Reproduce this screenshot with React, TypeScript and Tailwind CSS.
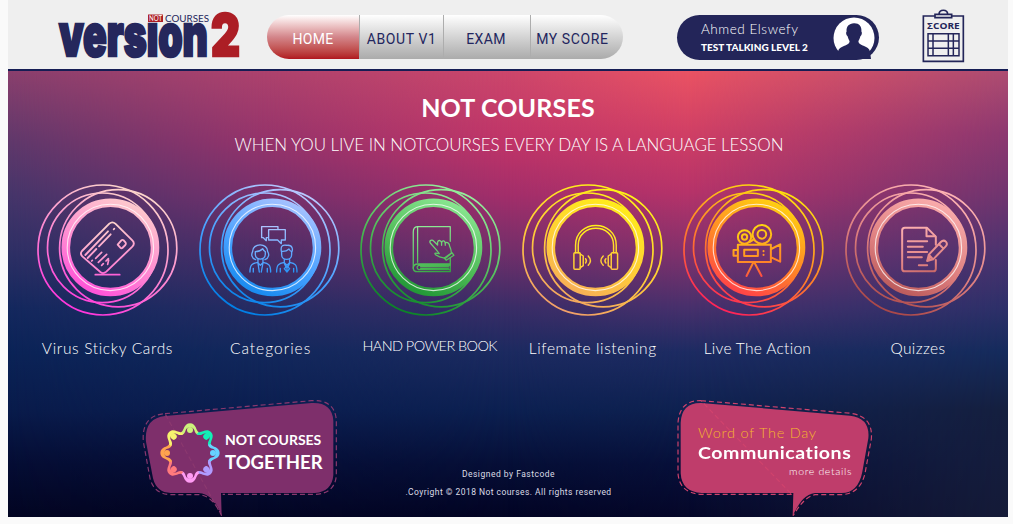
import React from "react";

type Palette = { id: string; light: string; mid: string; deep: string };

const palettes: Record<string, Palette> = {
  pink: { id: "pink", light: "#fdd6cb", mid: "#ff86d2", deep: "#ff35dc" },
  blue: { id: "blue", light: "#b9c8ff", mid: "#45a0ff", deep: "#007fe6" },
  green: { id: "green", light: "#95ef9c", mid: "#4bb954", deep: "#0b8426" },
  yellow: { id: "yellow", light: "#fff315", mid: "#ffcb38", deep: "#f2a068" },
  orange: { id: "orange", light: "#ffe00c", mid: "#ff7d2a", deep: "#ff2358" },
  rose: { id: "rose", light: "#ffb4b4", mid: "#de7f7f", deep: "#a94748" },
};

function CardIcon() {
  return (
    <g strokeWidth="5.5">
      <path d="M253 146Q262 138 271 146L322 196Q331 205 322 215L244 290Q235 298 226 291L172 244Q164 236 171 228Z" />
      <path d="M211 299H284" />
      <path d="M181 240L249 169M257 178L222 214M214 222L188 249" />
      <path d="M200 258L202 256M266 163L268 161M212 250L230 232M220 262L245 238M230 271L235 266M248 268L251 255M243 258L250 251" strokeWidth="5" />
      <path d="M278 209L289 196Q292 193 296 196L302 203Q304 207 301 210L292 219Q289 221 286 218Z" />
    </g>
  );
}

function PeopleIcon() {
  return (
    <g strokeWidth="4">
      <path d="M728 188H723V197L714 188H709V155H758V163" />
      <path d="M730 164H780V195H768V206L757 195H730Z" />
      <path d="M691 254C677 249 678 237 682 230C681 203 728 203 727 230C732 237 732 249 719 254" />
      <path d="M690 230C701 230 708 225 712 221Q716 229 720 230V238C720 257 690 257 690 238Z" />
      <path d="M698 253V263L705 271L713 263V253M698 262C680 265 674 270 674 291M713 262C730 265 736 270 736 291M684 280V291M726 280V291M698 264L702 291M713 264L708 291" />
      <path d="M769 232C762 205 781 211 785 211C803 209 803 225 799 232M769 229C780 230 787 226 791 222Q795 229 799 230V239C799 258 769 258 769 239Z" />
      <path d="M777 254V263L785 271L793 263V254M777 262C760 265 754 270 754 291M793 262C810 265 815 270 815 291M765 280V291M805 280V291M777 265L782 276L777 281L785 291L793 281L788 276L793 265M785 271V291" />
    </g>
  );
}

function BookIcon() {
  return (
    <g strokeWidth="3.8">
      <path d="M317 199V155H218Q206 156 206 171V280Q207 290 218 290H317V249" />
      <path d="M219 156V262M317 267H220Q206 267 206 280M317 271H222Q213 276 222 284H317M228 275H312M228 280H312" />
      <path d="M274 223L257 204C253 197 262 192 267 198L279 210V201C282 193 290 197 291 203C293 195 301 197 302 204C308 198 315 207 315 213C319 222 321 228 320 235L303 250C297 248 286 250 276 241C268 237 270 232 278 235L284 236L274 223Z" />
      <path d="M322 233L328 241L305 256L299 249ZM291 203V211M302 204V211" />
    </g>
  );
}

function HeadphonesIcon() {
  return (
    <g strokeWidth="4.4">
      <path d="M692 233V211C692 132 814 132 814 211V233M700 233V211C700 143 806 143 806 211V233" />
      <rect x="687" y="233" width="19" height="50" rx="3" />
      <rect x="799" y="233" width="19" height="50" rx="3" />
      <path d="M706 237L715 243V272L706 278M799 237L790 243V272L799 278" />
      <path d="M722 251Q727 257 722 264M730 243Q743 257 730 271M783 251Q777 257 783 264M775 243Q761 257 775 271" />
    </g>
  );
}

function CameraIcon() {
  return (
    <g strokeWidth="6">
      <circle cx="211" cy="186" r="20" />
      <circle cx="211" cy="186" r="8" />
      <circle cx="263" cy="178" r="28" />
      <circle cx="263" cy="178" r="13" />
      <path d="M191 209H290V261H191ZM190 225H178V242H190M291 222L318 208V260L291 247M227 201L239 193" />
      <path d="M210 224H251V243H210ZM237 263L217 303M241 263L262 303" />
      <path d="M268 228V229M268 239V240" />
    </g>
  );
}

function QuizIcon() {
  return (
    <g strokeWidth="6">
      <path d="M784 209V185L757 158H691Q683 158 683 166V281Q683 289 691 289H776Q784 289 784 281V255" />
      <path d="M756 160V184H782M700 199H758M700 215H745M700 231H758M700 247H742M733 271H758" />
      <path d="M758 258L763 239L799 201Q807 193 814 200Q821 207 813 215L776 253ZM763 239L776 253M793 207L807 221M758 257L769 246" />
    </g>
  );
}

type Topic = {
  label: string;
  palette: Palette;
  shift: number;
  Icon: () => React.JSX.Element;
  text: string;
};

const topics: Topic[] = [
  { label: "Virus Sticky Cards", palette: palettes.pink, shift: -10, Icon: CardIcon, text: "text-[15.5px] tracking-[0.65px] ml-[1px]" },
  { label: "Categories", palette: palettes.blue, shift: -171.7, Icon: PeopleIcon, text: "text-[15.5px] tracking-[1px] ml-[4px]" },
  { label: "HAND POWER BOOK", palette: palettes.green, shift: -13.4, Icon: BookIcon, text: "text-[14.5px] tracking-[-0.6px] -mt-[2px] mr-[1px]" },
  { label: "Lifemate listening", palette: palettes.yellow, shift: -175.1, Icon: HeadphonesIcon, text: "text-[15.5px] tracking-[0.6px] ml-[2px]" },
  { label: "Live The Action", palette: palettes.orange, shift: -6.8, Icon: CameraIcon, text: "text-[15.5px] tracking-[0.3px] ml-[8px]" },
  { label: "Quizzes", palette: palettes.rose, shift: -168.5, Icon: QuizIcon, text: "text-[15.5px] tracking-[0.4px] ml-[6px]" },
];

function TopicBadge({ topic }: { topic: Topic }) {
  const { palette, shift, Icon } = topic;
  const ring = `url(#ring-${palette.id})`;
  const glyph = `url(#glyph-${palette.id})`;
  return (
    <svg viewBox="0 0 144 136" className="h-[136px] w-[144px]" fill="none">
      <defs>
        <linearGradient id={`ring-${palette.id}`} gradientUnits="userSpaceOnUse" x1="100" y1="8" x2="46" y2="130">
          <stop offset="0" stopColor={palette.light} />
          <stop offset="0.55" stopColor={palette.mid} />
          <stop offset="1" stopColor={palette.deep} />
        </linearGradient>
        <linearGradient id={`glyph-${palette.id}`} gradientUnits="userSpaceOnUse" x1={-shift * 3 + 210} y1="140" x2={-shift * 3 + 240} y2="330">
          <stop offset="0" stopColor={palette.light} />
          <stop offset="0.7" stopColor={palette.mid} />
          <stop offset="1" stopColor={palette.deep} />
        </linearGradient>
      </defs>
      <g stroke={ring} strokeWidth="1.7">
        <circle cx="68" cy="68" r="65" />
        <circle cx="83.2" cy="66.2" r="58.6" />
        <circle cx="67.3" cy="65.8" r="54.8" />
        <circle cx="75.4" cy="65.4" r="44.6" strokeWidth="8.6" />
      </g>
      <circle cx="75.4" cy="65.4" r="43.2" stroke="#fff" strokeOpacity="0.75" strokeWidth="1.1" />
      <g transform={`translate(${shift} -7) scale(0.33333)`} stroke={glyph} strokeLinecap="round" strokeLinejoin="round">
        <Icon />
      </g>
    </svg>
  );
}

function Logo() {
  return (
    <svg viewBox="0 0 190 52" className="h-[52px] w-[190px]" fontFamily="Inter, 'Liberation Sans', sans-serif">
      <text x="5" y="45" fontSize="58" fontWeight="900" textLength="149" lengthAdjust="spacingAndGlyphs" fill="#25275c" stroke="#25275c" strokeWidth="2.6">
        vers&#305;on
      </text>
      <text x="157" y="45" fontSize="58" fontWeight="900" textLength="29" lengthAdjust="spacingAndGlyphs" fill="#ac1e25" stroke="#ac1e25" strokeWidth="2.6">
        2
      </text>
      <rect x="94" y="3.5" width="15" height="7.5" fill="#ac1e25" />
      <text x="95" y="9.8" fontSize="7" fontFamily="Lato, sans-serif" textLength="13" lengthAdjust="spacingAndGlyphs" fill="#fff">
        NOT
      </text>
      <text x="111" y="11" fontSize="10" fontFamily="Lato, sans-serif" textLength="44" lengthAdjust="spacingAndGlyphs" fill="#25275c">
        COURSES
      </text>
    </svg>
  );
}

function Avatar() {
  return (
    <svg viewBox="0 0 42 42" className="size-[42px]">
      <circle cx="21" cy="21" r="20.5" fill="#fff" />
      <path
        d="M21 6.2C26 6 29 9.5 28.4 14.5C29.4 15.5 28.8 18.6 27.4 19.2C26.8 22 25.6 23 25.4 24.8C26.2 29.2 36 28.5 37 34.5L38 42H4L5 34.5C6 28.5 15.8 29.2 16.6 24.8C16.4 23 15.2 22 14.6 19.2C13.2 18.6 12.6 15.5 13.6 14.5C13 9.5 16 6.4 21 6.2Z"
        fill="#232559"
      />
    </svg>
  );
}

function ScoreBoard() {
  return (
    <svg viewBox="785 22 134 166" className="h-[55.3px] w-[44.7px]" fill="none" stroke="#232559" strokeWidth="5">
      <path d="M827 46H792V182H912V46H877" />
      <path d="M827 41H877V51H827ZM839 40C840 25 864 25 865 40" />
      <text x="803" y="86" fontSize="28" fontWeight="700" fontFamily="'Open Sans', sans-serif" textLength="98" lengthAdjust="spacingAndGlyphs" fill="#232559" stroke="none">
        <tspan>&Sigma;</tspan>CORE
      </text>
      <path d="M806 99H899V165H806ZM821 99V165M867 99V165M882 99V165M806 121H899M806 143H899" strokeWidth="4.5" />
    </svg>
  );
}

const peopleColors = ["#cdf27c", "#12f0b6", "#66d2ff", "#b09cff", "#ff9bf3", "#ff7a7d", "#ffa44e", "#f7f26e"];

function PeopleCircle() {
  return (
    <svg viewBox="88 94 186 186" className="size-[62px]">
      {peopleColors.map((color, i) => (
        <g key={color} transform={`rotate(${i * 45} 181 187)`} fill={color}>
          <circle cx="181" cy="118" r="9" />
          <path d="M153 132C157 131 155 126 154 125C164 120 162 98 181 98C200 98 198 120 208 125C207 126 205 131 209 132C202 134 196 128 194 119C191 107 171 107 168 119C166 128 160 134 153 132Z" />
        </g>
      ))}
    </svg>
  );
}

const navItems = [
  { label: "ABOUT V1", text: "tracking-[0.6px]" },
  { label: "EXAM", text: "tracking-[0.4px] pr-[2px]" },
  { label: "MY SCORE", text: "tracking-[0.6px] pr-[9px]" },
];

function Header() {
  return (
    <header className="flex h-[71px] items-start border-b-[2px] border-[#161d54] bg-[#efefef] pt-[9px]">
      <div className="ml-[46px] mt-[2px] w-[213px] shrink-0">
        <Logo />
      </div>
      <nav className="mt-[6px] flex h-[44px] w-[356px] shrink-0 overflow-hidden rounded-full font-[Roboto,sans-serif] text-[14px]">
        <a className="flex w-[92px] items-center justify-center bg-linear-to-b from-white via-[#d3868b] to-[#b0141e] pt-[4px] tracking-[0.3px] text-white">
          HOME
        </a>
        {navItems.map((item) => (
          <a
            key={item.label}
            className={`flex flex-1 items-center justify-center border-l-[1.5px] border-[#adadad] bg-linear-to-b from-white to-[#ababab] pt-[4px] whitespace-nowrap text-[#23265e] ${item.text}`}
          >
            {item.label}
          </a>
        ))}
      </nav>
      <div className="mt-[6px] ml-[54px] flex h-[45px] w-[202px] shrink-0 items-center justify-between rounded-full bg-[#232559] pr-[4px] pl-[24px] text-white">
        <div className="flex flex-col font-[Lato,sans-serif] whitespace-nowrap">
          <span className="text-[13.5px] leading-[18px] font-light tracking-[0.55px]">Ahmed Elswefy</span>
          <span className="text-[10px] leading-[18px] font-black">TEST TALKING LEVEL 2</span>
        </div>
        <Avatar />
      </div>
      <div className="-mt-[1px] ml-[42px]">
        <ScoreBoard />
      </div>
    </header>
  );
}

function Backdrop() {
  return (
    <div className="absolute inset-0 -z-10">
      <div className="absolute inset-0 bg-[linear-gradient(to_bottom,#8a3f6d_0%,#5f386b_16%,#45356a_28%,#2d2f65_41%,#14285e_53%,#0b2357_63%,#091b4b_76%,#050d34_88%,#030522_100%)]" />
      <div className="absolute inset-0 bg-[linear-gradient(to_bottom,#ac426d_0%,#93336b_16%,#75306b_28%,#4a2e67_41%,#262c63_53%,#12285c_63%,#0b1e50_76%,#060f38_88%,#030523_100%)] [mask-image:linear-gradient(to_right,transparent_0%,black_25%)]" />
      <div className="absolute inset-0 bg-[linear-gradient(to_bottom,#cc466b_0%,#c03468_16%,#a22e6a_28%,#702f6a_41%,#3a2d67_53%,#1c2a60_63%,#0c2051_76%,#060f37_88%,#020424_100%)] [mask-image:linear-gradient(to_right,transparent_25%,black_50%)]" />
      <div className="absolute inset-0 bg-[linear-gradient(to_bottom,#ea5363_0%,#d03f65_14%,#b73369_27%,#80316c_41%,#48306c_53%,#1d2b62_63%,#0e2150_76%,#07103a_88%,#050729_100%)] [mask-image:linear-gradient(to_right,transparent_50%,black_68%)]" />
      <div className="absolute inset-0 bg-[linear-gradient(to_bottom,#ad4c71_0%,#8c3870_14%,#71356f_27%,#4a336f_41%,#2d3069_53%,#152b5c_63%,#151f3f_76%,#151d3d_88%,#151b38_100%)] [mask-image:linear-gradient(to_right,transparent_68%,black_100%)]" />
    </div>
  );
}

function TogetherBubble() {
  return (
    <div className="relative flex h-[127px] w-[220px] pt-[32px] pl-[29px] text-white">
      <svg viewBox="0 0 660 381" className="absolute inset-0 -z-10 size-full" fill="none">
        <path d="M105 78L545 39Q606 36 610 92V255Q606 305 555 309H273L275 377C262 345 245 312 205 309H122Q80 308 69 265L48 155Q42 85 105 78Z" fill="#7e2f6b" />
        <path
          d="M105 71L545 32Q614 28 619 90V257Q614 310 557 313H278M275 377C258 342 240 318 208 314H120Q72 312 60 265L40 155Q34 76 105 71Z"
          stroke="#8b386f"
          strokeWidth="3.5"
          strokeDasharray="15 9"
        />
      </svg>
      <PeopleCircle />
      <div className="mt-[8px] ml-[4px] flex flex-col font-[Lato,sans-serif] font-bold whitespace-nowrap">
        <span className="text-[14px] leading-[20px]">NOT COURSES</span>
        <span className="text-[18.5px] leading-[24px]">TOGETHER</span>
      </div>
    </div>
  );
}

function WordBubble() {
  return (
    <div className="relative flex h-[127px] w-[220px] flex-col items-start pt-[33px] pl-[33px] font-[Lato,sans-serif] whitespace-nowrap text-white">
      <svg viewBox="0 0 660 381" className="absolute inset-0 -z-10 size-full" fill="none">
        <path d="M108 39L555 77Q616 84 610 145L592 245Q580 308 530 309H450C415 314 400 345 383 377L385 309H110Q50 306 47 250V98Q50 38 108 39Z" fill="#bf3d6b" />
        <path
          d="M108 32L558 70Q625 80 619 147L600 250Q586 310 532 314H450C418 322 402 350 384 377M380 313H108Q43 309 39 250V98Q44 30 108 32Z"
          stroke="#d0436d"
          strokeWidth="3.5"
          strokeDasharray="15 9"
        />
      </svg>
      <span className="text-[14.5px] leading-[20px] tracking-[0.75px] font-light text-[#f5b52e]">Word of The Day</span>
      <span className="origin-left scale-x-[1.15] text-[17px] leading-[20px] font-bold tracking-[0.45px] [font-variant-ligatures:none]">Communications</span>
      <span className="self-end pr-[33px] text-[10.5px] leading-[16px] font-light tracking-[0.65px]">more details</span>
    </div>
  );
}

export default function App() {
  return (
    <div className="h-[524px] w-[1013px] overflow-hidden bg-[#fafafa] pl-[8px]">
      <div className="flex h-[517px] w-[1000px] flex-col">
        <Header />
        <main className="relative isolate flex flex-1 flex-col overflow-hidden">
          <Backdrop />
          <h1 className="mt-[21px] text-center font-[Lato,sans-serif] text-[25px] leading-[30px] font-bold tracking-[0.15px] text-white">NOT COURSES</h1>
          <p className="mt-[10px] pl-[2px] text-center font-[Lato,sans-serif] text-[17px] leading-[26px] font-light tracking-[-0.1px] whitespace-nowrap text-white">
            WHEN YOU LIVE IN NOTCOURSES EVERY DAY IS A LANGUAGE LESSON
          </p>
          <section className="mt-[24px] mr-[12.2px] ml-[18.2px] grid grid-cols-6">
            {topics.map((topic) => (
              <a key={topic.label} className="flex flex-col items-center">
                <TopicBadge topic={topic} />
                <span className="mt-[19px] block h-[22px]">
                  <span className={`block font-[Lato,sans-serif] leading-[22px] font-light whitespace-nowrap text-white ${topic.text}`}>{topic.label}</span>
                </span>
              </a>
            ))}
          </section>
          <footer className="mt-auto flex h-[127px] justify-start pl-[122px]">
            <TogetherBubble />
            <div className="flex w-[315px] flex-col items-center pt-[75px] pl-[2px] font-[Roboto,sans-serif] text-[8.5px] leading-[18px] whitespace-nowrap text-[#dcdce6]">
              <span className="tracking-[0.5px]">Designed by Fastcode</span>
              <span className="tracking-[0.45px]">.Coyright © 2018 Not courses. All rights reserved</span>
            </div>
            <WordBubble />
          </footer>
        </main>
      </div>
    </div>
  );
}
